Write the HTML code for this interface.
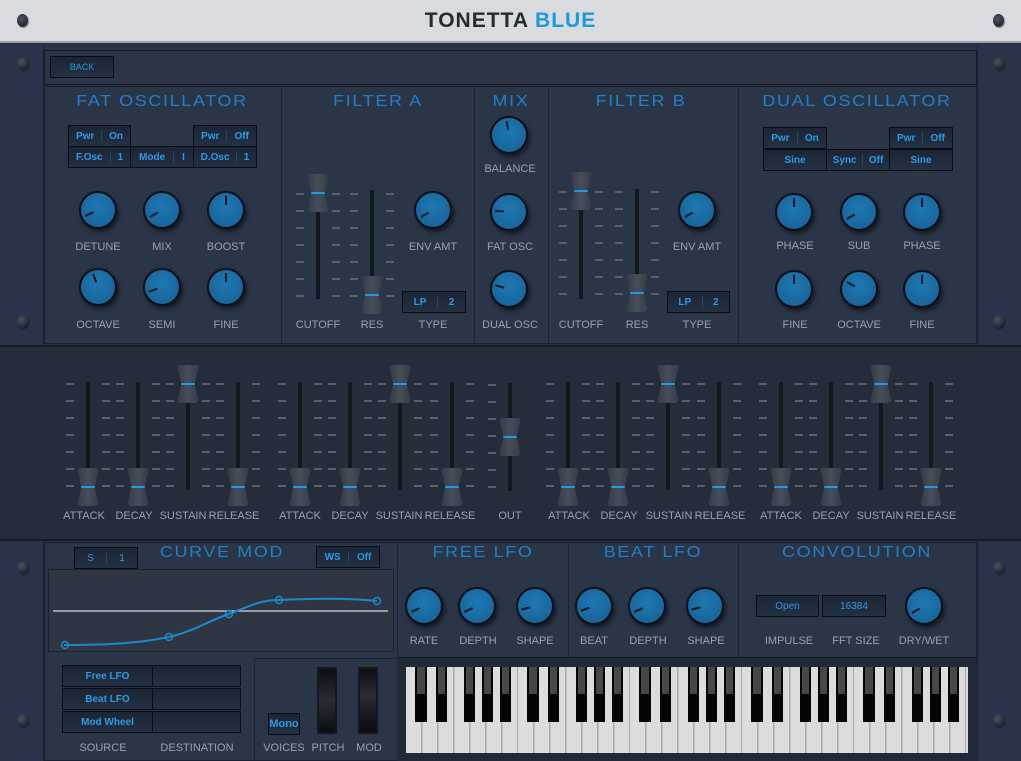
<!DOCTYPE html><html><head><meta charset="utf-8"><style>
*{box-sizing:border-box;margin:0;padding:0}
body{width:1021px;height:761px;overflow:hidden;background:#283244;font-family:"Liberation Sans",sans-serif;position:relative}
div,span{position:absolute}
.hdr{left:0;top:0;width:1021px;height:43px;background:#dadbdf;border-bottom:2px solid #9da2aa}
.scr{width:11px;height:13px;border-radius:50%;background:radial-gradient(circle at 40% 35%,#4a5260,#15191f);box-shadow:1px 1px 1px rgba(0,0,0,.4)}
.pan{background:#2b3548;border:1px solid #1a2130}
.h{color:#1f80c6;font-size:16px;letter-spacing:1.5px;width:240px;margin-left:-120px;text-align:center;transform:scaleX(1.12)}
.l{color:#9ba1aa;font-size:11px;width:90px;margin-left:-45px;text-align:center}
.k{width:38px;height:38px;border-radius:50%;background:radial-gradient(circle at 50% 40%,#1f78b2,#155f93);border:2px solid #0b0f16;box-shadow:2px 3px 4px rgba(0,0,0,.55)}
.k i{position:absolute;left:16px;top:3px;width:2px;height:9px;background:#0e1a27;transform-origin:1px 14px}
.bx{background:linear-gradient(#1b2535,#243043);border:1px solid #0a0d12;color:#2a9be6;font-size:10px;font-weight:bold;display:flex;align-items:center;justify-content:space-evenly;height:22px}
.bx b{width:1px;height:12px;background:#1b4a6e}
.tr{width:4px;background:#14171c}
.tk{width:44px;background-image:repeating-linear-gradient(to bottom,#58606d 0 2px,transparent 2px 17px),repeating-linear-gradient(to bottom,#58606d 0 2px,transparent 2px 17px);background-size:8px 100%,8px 100%;background-position:0 0,100% 0;background-repeat:no-repeat}
.sh{width:22px;height:38px;background:linear-gradient(90deg,#343a45,#474e5b 50%,#353b46);border-radius:3px;box-shadow:2px 3px 4px rgba(0,0,0,.6);clip-path:polygon(0 0,100% 0,80% 50%,100% 100%,0 100%,20% 50%)}
.sh::after{content:"";position:absolute;left:2px;right:2px;top:18px;height:2px;background:#1e9ce6}
</style></head><body>
<div class="hdr"></div>
<div style="left:0;top:9px;width:1021px;text-align:center;font-size:21px;font-weight:bold;letter-spacing:1px;color:#262a32">TONETTA <span style="position:static;color:#1a9ae2">BLUE</span></div>
<div class="scr" style="left:17px;top:14px"></div><div class="scr" style="left:993px;top:14px"></div>
<div style="left:0;top:45px;width:44px;height:716px;background:#29334a;border-right:1px solid #1a2130"></div>
<div style="left:977px;top:45px;width:44px;height:716px;background:#29334a;border-left:1px solid #1a2130"></div>
<div class="scr" style="left:17px;top:57px"></div><div class="scr" style="left:17px;top:315px"></div><div class="scr" style="left:17px;top:561px"></div><div class="scr" style="left:17px;top:714px"></div>
<div class="scr" style="left:993px;top:57px"></div><div class="scr" style="left:993px;top:315px"></div><div class="scr" style="left:993px;top:561px"></div><div class="scr" style="left:993px;top:714px"></div>
<div class="pan" style="left:44px;top:50px;width:933px;height:35px;border:1px solid #141922"></div>
<div class="bx" style="left:50px;top:56px;width:64px;height:22px;font-weight:normal;color:#1e9ae6;font-size:9px">BACK</div>
<div class="pan" style="left:44px;top:86px;width:238px;height:258px"></div>
<div class="pan" style="left:281px;top:86px;width:194px;height:258px"></div>
<div class="pan" style="left:474px;top:86px;width:75px;height:258px"></div>
<div class="pan" style="left:548px;top:86px;width:191px;height:258px"></div>
<div class="pan" style="left:738px;top:86px;width:239px;height:258px"></div>
<div class="h" style="left:162px;top:93px">FAT OSCILLATOR</div>
<div class="h" style="left:378px;top:93px">FILTER A</div>
<div class="h" style="left:511px;top:93px">MIX</div>
<div class="h" style="left:641px;top:93px">FILTER B</div>
<div class="h" style="left:857px;top:93px">DUAL OSCILLATOR</div>
<div class="bx" style="left:68px;top:125px;width:63px">Pwr<b></b>On</div>
<div class="bx" style="left:193px;top:125px;width:64px">Pwr<b></b>Off</div>
<div class="bx" style="left:68px;top:146px;width:63px">F.Osc<b></b>1</div>
<div class="bx" style="left:130px;top:146px;width:64px">Mode<b></b>I</div>
<div class="bx" style="left:193px;top:146px;width:64px">D.Osc<b></b>1</div>
<div class="bx" style="left:763px;top:127px;width:64px">Pwr<b></b>On</div>
<div class="bx" style="left:889px;top:127px;width:64px">Pwr<b></b>Off</div>
<div class="bx" style="left:763px;top:149px;width:64px">Sine</div>
<div class="bx" style="left:826px;top:149px;width:64px">Sync<b></b>Off</div>
<div class="bx" style="left:889px;top:149px;width:64px">Sine</div>
<div class="k" style="left:79px;top:191px"><i style="transform:rotate(-115deg)"></i></div>
<div class="k" style="left:143px;top:191px"><i style="transform:rotate(-120deg)"></i></div>
<div class="k" style="left:207px;top:191px"><i></i></div>
<div class="k" style="left:79px;top:268px"><i style="transform:rotate(-20deg)"></i></div>
<div class="k" style="left:143px;top:268px"><i style="transform:rotate(-110deg)"></i></div>
<div class="k" style="left:207px;top:268px"><i></i></div>
<div class="l" style="left:98px;top:241px">DETUNE</div><div class="l" style="left:162px;top:241px">MIX</div><div class="l" style="left:226px;top:241px">BOOST</div>
<div class="l" style="left:98px;top:319px">OCTAVE</div><div class="l" style="left:162px;top:319px">SEMI</div><div class="l" style="left:226px;top:319px">FINE</div>
<div class="k" style="left:414px;top:191px"><i style="transform:rotate(-120deg)"></i></div>
<div class="l" style="left:433px;top:241px">ENV AMT</div>
<div class="bx" style="left:402px;top:291px;width:64px">LP<b></b>2</div>
<div class="l" style="left:433px;top:319px">TYPE</div>
<div class="k" style="left:490px;top:116px"><i style="transform:rotate(-10deg)"></i></div>
<div class="k" style="left:490px;top:193px"><i style="transform:rotate(-85deg)"></i></div>
<div class="k" style="left:490px;top:270px"><i style="transform:rotate(-75deg)"></i></div>
<div class="l" style="left:510px;top:163px">BALANCE</div><div class="l" style="left:510px;top:241px">FAT OSC</div><div class="l" style="left:510px;top:319px">DUAL OSC</div>
<div class="k" style="left:678px;top:191px"><i style="transform:rotate(-120deg)"></i></div>
<div class="l" style="left:697px;top:241px">ENV AMT</div>
<div class="bx" style="left:667px;top:291px;width:63px">LP<b></b>2</div>
<div class="l" style="left:697px;top:319px">TYPE</div>
<div class="k" style="left:775px;top:193px"><i></i></div>
<div class="k" style="left:840px;top:193px"><i style="transform:rotate(-120deg)"></i></div>
<div class="k" style="left:903px;top:193px"><i></i></div>
<div class="k" style="left:775px;top:270px"><i></i></div>
<div class="k" style="left:840px;top:270px"><i style="transform:rotate(-60deg)"></i></div>
<div class="k" style="left:903px;top:270px"><i></i></div>
<div class="l" style="left:795px;top:240px">PHASE</div><div class="l" style="left:859px;top:240px">SUB</div><div class="l" style="left:922px;top:240px">PHASE</div>
<div class="l" style="left:795px;top:319px">FINE</div><div class="l" style="left:859px;top:319px">OCTAVE</div><div class="l" style="left:922px;top:319px">FINE</div>
<div class="tk" style="left:296px;top:193px;height:104px"></div><div class="tk" style="left:350px;top:193px;height:104px"></div>
<div class="tr" style="left:316px;top:195px;height:104px"></div><div class="tr" style="left:370px;top:190px;height:110px"></div>
<div class="sh" style="left:307px;top:174px"></div><div class="sh" style="left:361px;top:276px"></div>
<div class="l" style="left:318px;top:319px">CUTOFF</div><div class="l" style="left:372px;top:319px">RES</div>
<div class="tk" style="left:559px;top:191px;height:104px"></div><div class="tk" style="left:615px;top:191px;height:104px"></div>
<div class="tr" style="left:579px;top:195px;height:104px"></div><div class="tr" style="left:635px;top:189px;height:110px"></div>
<div class="sh" style="left:570px;top:172px"></div><div class="sh" style="left:626px;top:274px"></div>
<div class="l" style="left:581px;top:319px">CUTOFF</div><div class="l" style="left:637px;top:319px">RES</div>
<div style="left:0;top:345px;width:1021px;height:196px;background:#252d3b;border-top:2px solid #161b24;border-bottom:2px solid #161b24"></div>
<div class="tk" style="left:66px;top:383px;height:104px"></div><div class="tk" style="left:166px;top:383px;height:104px"></div>
<div class="tk" style="left:216px;top:383px;height:104px"></div><div class="tk" style="left:116px;top:383px;height:104px"></div>
<div class="tk" style="left:278px;top:383px;height:104px"></div><div class="tk" style="left:328px;top:383px;height:104px"></div>
<div class="tk" style="left:378px;top:383px;height:104px"></div><div class="tk" style="left:430px;top:383px;height:104px"></div>
<div class="tk" style="left:488px;top:384px;height:104px;background-size:8px 100%,0 0"></div>
<div class="tk" style="left:546px;top:383px;height:104px"></div><div class="tk" style="left:596px;top:383px;height:104px"></div>
<div class="tk" style="left:646px;top:383px;height:104px"></div><div class="tk" style="left:697px;top:383px;height:104px"></div>
<div class="tk" style="left:759px;top:383px;height:104px"></div><div class="tk" style="left:809px;top:383px;height:104px"></div>
<div class="tk" style="left:859px;top:383px;height:104px"></div><div class="tk" style="left:909px;top:383px;height:104px"></div>
<div class="tr" style="left:86px;top:382px;height:108px"></div><div class="tr" style="left:136px;top:382px;height:108px"></div><div class="tr" style="left:186px;top:382px;height:108px"></div><div class="tr" style="left:236px;top:382px;height:108px"></div>
<div class="tr" style="left:298px;top:382px;height:108px"></div><div class="tr" style="left:348px;top:382px;height:108px"></div><div class="tr" style="left:398px;top:382px;height:108px"></div><div class="tr" style="left:450px;top:382px;height:108px"></div>
<div class="tr" style="left:508px;top:383px;height:108px"></div>
<div class="tr" style="left:566px;top:382px;height:108px"></div><div class="tr" style="left:616px;top:382px;height:108px"></div><div class="tr" style="left:666px;top:382px;height:108px"></div><div class="tr" style="left:717px;top:382px;height:108px"></div>
<div class="tr" style="left:779px;top:382px;height:108px"></div><div class="tr" style="left:829px;top:382px;height:108px"></div><div class="tr" style="left:879px;top:382px;height:108px"></div><div class="tr" style="left:929px;top:382px;height:108px"></div>
<div class="sh" style="left:77px;top:468px"></div><div class="sh" style="left:127px;top:468px"></div><div class="sh" style="left:177px;top:365px"></div><div class="sh" style="left:227px;top:468px"></div>
<div class="sh" style="left:289px;top:468px"></div><div class="sh" style="left:339px;top:468px"></div><div class="sh" style="left:389px;top:365px"></div><div class="sh" style="left:441px;top:468px"></div>
<div class="sh" style="left:499px;top:418px"></div>
<div class="sh" style="left:557px;top:468px"></div><div class="sh" style="left:607px;top:468px"></div><div class="sh" style="left:657px;top:365px"></div><div class="sh" style="left:708px;top:468px"></div>
<div class="sh" style="left:770px;top:468px"></div><div class="sh" style="left:820px;top:468px"></div><div class="sh" style="left:870px;top:365px"></div><div class="sh" style="left:920px;top:468px"></div>
<div class="l" style="left:84px;top:510px">ATTACK</div><div class="l" style="left:134px;top:510px">DECAY</div><div class="l" style="left:183px;top:510px">SUSTAIN</div><div class="l" style="left:234px;top:510px">RELEASE</div>
<div class="l" style="left:300px;top:510px">ATTACK</div><div class="l" style="left:350px;top:510px">DECAY</div><div class="l" style="left:399px;top:510px">SUSTAIN</div><div class="l" style="left:450px;top:510px">RELEASE</div>
<div class="l" style="left:510px;top:510px">OUT</div>
<div class="l" style="left:569px;top:510px">ATTACK</div><div class="l" style="left:619px;top:510px">DECAY</div><div class="l" style="left:669px;top:510px">SUSTAIN</div><div class="l" style="left:720px;top:510px">RELEASE</div>
<div class="l" style="left:781px;top:510px">ATTACK</div><div class="l" style="left:831px;top:510px">DECAY</div><div class="l" style="left:880px;top:510px">SUSTAIN</div><div class="l" style="left:931px;top:510px">RELEASE</div>
<div class="pan" style="left:44px;top:542px;width:354px;height:219px"></div>
<div class="pan" style="left:397px;top:542px;width:172px;height:116px"></div>
<div class="pan" style="left:568px;top:542px;width:171px;height:116px"></div>
<div class="pan" style="left:738px;top:542px;width:239px;height:116px"></div>
<div class="h" style="left:222px;top:544px">CURVE MOD</div>
<div class="h" style="left:483px;top:544px">FREE LFO</div>
<div class="h" style="left:653px;top:544px">BEAT LFO</div>
<div class="h" style="left:857px;top:544px">CONVOLUTION</div>
<div class="bx" style="left:74px;top:547px;width:64px;font-weight:normal">S<b></b>1</div>
<div class="bx" style="left:316px;top:546px;width:64px">WS<b></b>Off</div>
<div style="left:48px;top:569px;width:346px;height:83px;background:#2f3643;border:1px solid #1c222c"></div>
<svg style="position:absolute;left:0;top:0" width="1021" height="761"><line x1="53" y1="611" x2="388" y2="611" stroke="#d8dbe0" stroke-width="1.2"/>
<path d="M64 645 C110 645 140 643 169 637 C195 631 210 620 229 614 C250 606 260 600 279 600 C320 598 350 598 377 601" fill="none" stroke="#1f86cc" stroke-width="2"/>
<g fill="none" stroke="#1f86cc" stroke-width="1.5"><circle cx="65" cy="645" r="3.5"/><circle cx="169" cy="637" r="3.5"/><circle cx="229" cy="614" r="3.5"/><circle cx="279" cy="600" r="3.5"/><circle cx="377" cy="601" r="3.5"/></g></svg>
<div class="bx" style="left:62px;top:665px;width:91px">Free LFO</div><div class="bx" style="left:152px;top:665px;width:89px"></div>
<div class="bx" style="left:62px;top:688px;width:91px">Beat LFO</div><div class="bx" style="left:152px;top:688px;width:89px"></div>
<div class="bx" style="left:62px;top:711px;width:91px">Mod Wheel</div><div class="bx" style="left:152px;top:711px;width:89px"></div>
<div class="l" style="left:103px;top:742px">SOURCE</div><div class="l" style="left:197px;top:742px">DESTINATION</div>
<div class="pan" style="left:254px;top:658px;width:144px;height:103px"></div>
<div class="bx" style="left:268px;top:713px;width:32px;height:22px;font-size:11px">Mono</div>
<div style="left:317px;top:667px;width:20px;height:67px;background:linear-gradient(#0b0d10,#2a2d33 50%,#0b0d10);border:2px solid #15181d"></div>
<div style="left:358px;top:667px;width:20px;height:67px;background:linear-gradient(#0b0d10,#2a2d33 40%,#15171b 75%,#0b0d10);border:2px solid #15181d"></div>
<div class="l" style="left:284px;top:742px">VOICES</div><div class="l" style="left:328px;top:742px">PITCH</div><div class="l" style="left:369px;top:742px">MOD</div>
<div class="k" style="left:405px;top:587px"><i style="transform:rotate(-115deg)"></i></div>
<div class="k" style="left:458px;top:587px"><i style="transform:rotate(-115deg)"></i></div>
<div class="k" style="left:516px;top:587px"><i style="transform:rotate(-105deg)"></i></div>
<div class="k" style="left:575px;top:587px"><i style="transform:rotate(-110deg)"></i></div>
<div class="k" style="left:628px;top:587px"><i style="transform:rotate(-115deg)"></i></div>
<div class="k" style="left:686px;top:587px"><i style="transform:rotate(-105deg)"></i></div>
<div class="k" style="left:905px;top:587px"><i style="transform:rotate(-120deg)"></i></div>
<div class="l" style="left:424px;top:635px">RATE</div><div class="l" style="left:478px;top:635px">DEPTH</div><div class="l" style="left:535px;top:635px">SHAPE</div>
<div class="l" style="left:594px;top:635px">BEAT</div><div class="l" style="left:648px;top:635px">DEPTH</div><div class="l" style="left:706px;top:635px">SHAPE</div>
<div class="bx" style="left:756px;top:595px;width:63px;font-weight:normal">Open</div>
<div class="bx" style="left:822px;top:595px;width:64px;font-weight:normal">16384</div>
<div class="l" style="left:789px;top:635px">IMPULSE</div><div class="l" style="left:856px;top:635px">FFT SIZE</div><div class="l" style="left:924px;top:635px">DRY/WET</div>
<div style="left:397px;top:657px;width:580px;height:104px;background:#222a38;border-top:1px solid #141922"></div>
<svg style="position:absolute;left:406px;top:667px" width="562" height="86">
<defs><pattern id="oc" width="112" height="86" patternUnits="userSpaceOnUse">
<rect width="112" height="86" fill="#dcdcdc"/>
<g fill="#a9a9a9"><rect x="15" width="1.5" height="86"/><rect x="31" width="1.5" height="86"/><rect x="47" width="1.5" height="86"/><rect x="63" width="1.5" height="86"/><rect x="79" width="1.5" height="86"/><rect x="95" width="1.5" height="86"/><rect x="111" width="1.5" height="86"/></g>
<g fill="#050505"><rect x="9" width="12" height="55"/><rect x="30" width="11" height="55"/><rect x="58" width="11" height="55"/><rect x="76" width="11" height="55"/><rect x="94" width="11" height="55"/></g>
<g fill="#474747"><rect x="11" width="8" height="27"/><rect x="32" width="7" height="27"/><rect x="60" width="7" height="27"/><rect x="78" width="7" height="27"/><rect x="96" width="7" height="27"/></g>
</pattern></defs><rect width="562" height="86" fill="url(#oc)"/></svg>
</body></html>
